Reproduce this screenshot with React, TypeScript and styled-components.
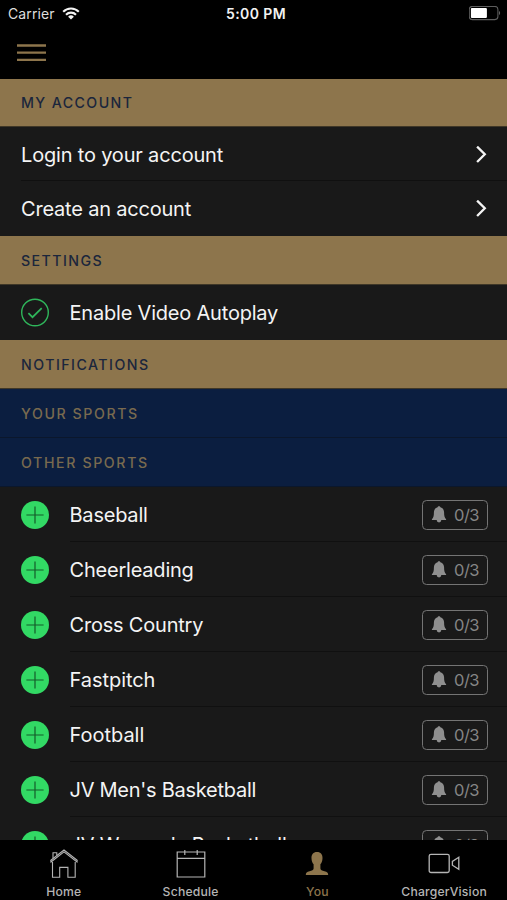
import React from "react";
import styled, { createGlobalStyle } from "styled-components";

const GOLD = "#8d754c";
const NAVY = "#0b1e40";
const GREEN = "#32d964";

const GlobalStyle = createGlobalStyle`
  * { box-sizing: border-box; }
  body { margin: 0; background: #000; }
`;

const Screen = styled.div`
  width: 507px;
  height: 900px;
  display: flex;
  flex-direction: column;
  overflow: hidden;
  background: #000;
  color: #f4f4f4;
  font-family: Inter, "Liberation Sans", sans-serif;
`;

const StatusBar = styled.div`
  height: 27px;
  flex: none;
  display: grid;
  grid-template-columns: 1fr auto 1fr;
  align-items: center;
  padding: 0 6px 0 8px;
  font-size: 14px;
  line-height: 17px;
`;

const Carrier = styled.div`
  display: flex;
  align-items: center;
  gap: 7px;
  color: #dedede;
  letter-spacing: 0.12px;
`;

const Clock = styled.div`
  font-weight: 600;
  letter-spacing: 0.4px;
  color: #f2f2f2;
  padding-left: 3px;
`;

const BatterySlot = styled.div`
  display: flex;
  justify-content: flex-end;
`;

const NavBar = styled.div`
  height: 52px;
  flex: none;
  display: flex;
  align-items: center;
  padding-left: 17px;
`;

const List = styled.main`
  flex: 1;
  min-height: 0;
  overflow: hidden;
  background: #191919;
`;

const SectionHeader = styled.div<{ $navy?: boolean; $height: number; $spacing: number }>`
  height: ${(p) => p.$height}px;
  display: flex;
  align-items: flex-end;
  padding: 0 0 14px 21px;
  background: ${(p) => (p.$navy ? NAVY : GOLD)};
  color: ${(p) => (p.$navy ? "#796a4f" : "#1b263c")};
  border-bottom: 1px solid ${(p) => (p.$navy ? "#0b172c" : "#3f3727")};
  font-size: 14.2px;
  line-height: 18px;
  font-weight: 500;
  letter-spacing: ${(p) => p.$spacing}px;
`;

const Row = styled.div<{ $height: number }>`
  height: ${(p) => p.$height}px;
  display: flex;
  align-items: center;
  padding-left: 21px;
`;

const RowBody = styled.div<{ $divider?: boolean; $right: number }>`
  flex: 1;
  align-self: stretch;
  display: flex;
  align-items: center;
  justify-content: space-between;
  padding: 2px ${(p) => p.$right}px 0 0;
  border-bottom: 1px solid ${(p) => (p.$divider ? "#101010" : "transparent")};
`;

const RowIcon = styled.div`
  width: 48.5px;
  display: flex;
`;

const Label = styled.span<{ $spacing: number }>`
  font-size: 20px;
  line-height: 26px;
  letter-spacing: ${(p) => p.$spacing}px;
  white-space: nowrap;
`;

const AlertBadge = styled.div`
  width: 66px;
  height: 30px;
  display: flex;
  align-items: center;
  gap: 7px;
  padding-left: 8px;
  border: 1px solid #747474;
  border-radius: 4.5px;
  color: #858585;
  font-size: 16.5px;
  letter-spacing: -0.5px;
`;

const TabBar = styled.nav`
  height: 60px;
  flex: none;
  display: grid;
  grid-template-columns: repeat(4, 1fr);
  background: #000;
`;

const Tab = styled.div<{ $active?: boolean }>`
  display: flex;
  flex-direction: column;
  align-items: center;
  padding: 8px 0 0 1px;
  color: ${(p) => (p.$active ? GOLD : "#b5b5b5")};
  font-size: 12.2px;
  font-weight: 500;
  line-height: 16px;
  letter-spacing: 0.2px;
  gap: 5px;
`;

const BurgerIcon = () => (
  <svg width="29" height="18" viewBox="0 0 29 18" stroke={GOLD} strokeWidth="2.3">
    <path d="M0 1.500h29M0 8.600h29M0 15.800h29" />
  </svg>
);

const WifiIcon = () => (
  <svg width="18" height="13" viewBox="0 0 18 13" fill="none" stroke="#f4f4f4" strokeWidth="2.1">
    <path d="M1.2 4.8a11 11 0 0 1 15.6 0M4 7.7a7.1 7.1 0 0 1 10 0" />
    <path d="M9 12.6 6.1 9.8a4.1 4.1 0 0 1 5.8 0Z" fill="#f4f4f4" stroke="none" />
  </svg>
);

const BatteryIcon = () => (
  <svg width="32" height="15" viewBox="0 0 32 15">
    <rect x="0.3" y="0.4" width="28.6" height="13.2" rx="3" fill="none" stroke="#5d5d5d" strokeWidth="1.1" />
    <rect x="1.9" y="2.1" width="16" height="9.8" rx="1" fill="#fff" />
    <path d="M30 5c1.5.6 1.5 3.5 0 4.1Z" fill="#666" />
  </svg>
);

const Chevron = () => (
  <svg width="12" height="18" viewBox="0 0 12 18" fill="none" stroke="#f4f4f4" strokeWidth="2.3">
    <path d="m1.1.6 7.700 7.700-7.700 7.700" />
  </svg>
);

const CheckIcon = () => (
  <svg width="28" height="30" viewBox="0 0 28 30" fill="none" stroke="#2fb65b">
    <circle cx="14" cy="14.5" r="13.3" strokeWidth="1.4" />
    <path d="m7.4 15.200 4.1 4 9.200-9.100" strokeWidth="1.7" />
  </svg>
);

const PlusIcon = () => (
  <svg width="28" height="28" viewBox="0 0 28 28">
    <circle cx="14" cy="14" r="14" fill={GREEN} />
    <path d="M14 5.4v17.2M5.4 14h17.2" stroke="#155c2a" strokeWidth="1.2" />
  </svg>
);

const BellIcon = () => (
  <svg width="16" height="18" viewBox="0 0 16 18" fill="#8f8f8f">
    <path d="M8 .2c.9 0 1.3.5 1.4 1.1 2.5.6 3.7 2.7 3.7 5.3 0 3.4.4 5.3 2 6.6v.9H.9v-.9c1.6-1.3 2-3.2 2-6.6 0-2.6 1.2-4.700 3.700-5.300C6.700.7 7.100.2 8 .2Z" />
    <path d="M5.700 14.100h4.600a2.300 2.300 0 0 1-4.600 0Z" />
  </svg>
);

const HomeIcon = () => (
  <svg width="30" height="31" viewBox="0 0 30 31" fill="none" stroke="#b5b5b5" strokeWidth="1.1">
    <path d="M3.500 14v15.200h7.200v-9.800h8.200v9.800h7.300V14" />
    <path d="M2 14 15 3.900 28 14l.2-1.800L15 2 1.800 12.200Z" />
    <path d="M4 10.200V4.700h3.800v2.600" />
  </svg>
);

const CalendarIcon = () => (
  <svg width="30" height="31" viewBox="0 0 30 31" fill="none" stroke="#b5b5b5" strokeWidth="1.2">
    <path d="M1.200 4h27.600v25H1.200ZM1.200 10.300h27.600M8.800 2v5M21.200 2v5" />
  </svg>
);

const PersonIcon = () => (
  <svg width="30" height="31" viewBox="0 0 30 31" fill={GOLD}>
    <path d="M15 4c3.800 0 5.700 2.600 5.500 6.200-.1 2.800-.9 4.700-2.100 6v4.200c0 1.500 1.700 2.100 4.100 2.900 2.600.8 3.700 1.300 3.700 3.700H3.800c0-2.400 1.100-2.900 3.700-3.700 2.400-.8 4.100-1.400 4.100-2.900v-4.200c-1.200-1.300-2-3.200-2.100-6C9.300 6.600 11.200 4 15 4Z" />
  </svg>
);

const VideoIcon = () => (
  <svg width="32" height="31" viewBox="0 0 32 31" fill="none" stroke="#b5b5b5" strokeWidth="1.3">
    <rect x="1.200" y="6.300" width="20" height="18.200" rx="1.800" />
    <path d="m30.800 9.300-6.400 4.100v3.800l6.400 4.200Z" />
  </svg>
);

const ACCOUNT_ROWS = [
  { name: "Login to your account", height: 54, spacing: -0.18 },
  { name: "Create an account", height: 55, spacing: -0.2 },
];

const SPORTS = [
  { name: "Baseball", spacing: -0.22 },
  { name: "Cheerleading", spacing: -0.21 },
  { name: "Cross Country", spacing: -0.2 },
  { name: "Fastpitch", spacing: -0.05 },
  { name: "Football", spacing: -0.02 },
  { name: "JV Men's Basketball", spacing: -0.26 },
  { name: "JV Women's Basketball", spacing: -0.22 },
];

const TABS = [
  { name: "Home", icon: <HomeIcon /> },
  { name: "Schedule", icon: <CalendarIcon /> },
  { name: "You", icon: <PersonIcon />, active: true },
  { name: "ChargerVision", icon: <VideoIcon /> },
];

export default function App() {
  return (
    <Screen>
      <GlobalStyle />
      <StatusBar>
        <Carrier>
          Carrier
          <WifiIcon />
        </Carrier>
        <Clock>5:00 PM</Clock>
        <BatterySlot>
          <BatteryIcon />
        </BatterySlot>
      </StatusBar>
      <NavBar>
        <BurgerIcon />
      </NavBar>
      <List>
        <SectionHeader $height={48} $spacing={1.4}>MY ACCOUNT</SectionHeader>
        {ACCOUNT_ROWS.map((row, i) => (
          <Row key={row.name} $height={row.height}>
            <RowBody $right={19} $divider={i === 0}>
              <Label $spacing={row.spacing}>{row.name}</Label>
              <Chevron />
            </RowBody>
          </Row>
        ))}
        <SectionHeader $height={49} $spacing={1.45}>SETTINGS</SectionHeader>
        <Row $height={55}>
          <RowIcon>
            <CheckIcon />
          </RowIcon>
          <RowBody $right={19}>
            <Label $spacing={-0.2}>Enable Video Autoplay</Label>
          </RowBody>
        </Row>
        <SectionHeader $height={49} $spacing={1.48}>NOTIFICATIONS</SectionHeader>
        <SectionHeader $navy $height={49} $spacing={1.58}>YOUR SPORTS</SectionHeader>
        <SectionHeader $navy $height={49} $spacing={1.6}>OTHER SPORTS</SectionHeader>
        {SPORTS.map((sport) => (
          <Row key={sport.name} $height={55}>
            <RowIcon>
              <PlusIcon />
            </RowIcon>
            <RowBody $right={19} $divider>
              <Label $spacing={sport.spacing}>{sport.name}</Label>
              <AlertBadge>
                <BellIcon />
                0/3
              </AlertBadge>
            </RowBody>
          </Row>
        ))}
      </List>
      <TabBar>
        {TABS.map((tab) => (
          <Tab key={tab.name} $active={tab.active}>
            {tab.icon}
            {tab.name}
          </Tab>
        ))}
      </TabBar>
    </Screen>
  );
}
